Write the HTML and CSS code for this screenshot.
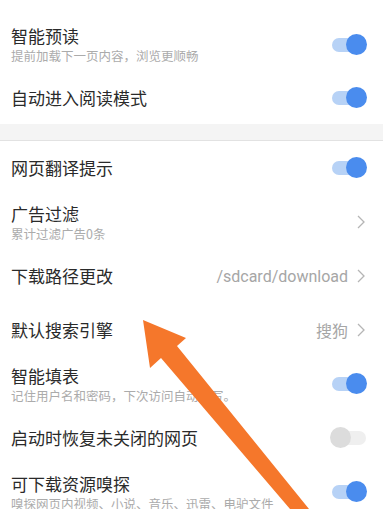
FILE: index.html
```html
<!DOCTYPE html>
<html lang="zh">
<head>
<meta charset="utf-8">
<link rel="stylesheet" href="styles.css">
</head>
<body>
<div class="page">
  <div class="group first">
    <div class="row">
      <div class="text"><div class="title">智能预读</div><div class="sub">提前加载下一页内容，浏览更顺畅</div></div>
      <div class="toggle on"><span class="thumb"></span></div>
    </div>
    <div class="row">
      <div class="text"><div class="title">自动进入阅读模式</div></div>
      <div class="toggle on"><span class="thumb"></span></div>
    </div>
  </div>
  <div class="band"></div>
  <div class="group">
    <div class="row">
      <div class="text"><div class="title">网页翻译提示</div></div>
      <div class="toggle on"><span class="thumb"></span></div>
    </div>
    <div class="row">
      <div class="text"><div class="title">广告过滤</div><div class="sub">累计过滤广告0条</div></div>
      <div class="right"><svg class="chev" width="8" height="14" viewBox="0 0 8 14"><polyline points="1,1 7,7 1,13" fill="none" stroke="#b5b5b5" stroke-width="1.3"/></svg></div>
    </div>
    <div class="row">
      <div class="text"><div class="title">下载路径更改</div></div>
      <div class="right"><span class="value latin">/sdcard/download</span><svg class="chev" width="8" height="14" viewBox="0 0 8 14"><polyline points="1,1 7,7 1,13" fill="none" stroke="#b5b5b5" stroke-width="1.3"/></svg></div>
    </div>
    <div class="row">
      <div class="text"><div class="title">默认搜索引擎</div></div>
      <div class="right"><span class="value">搜狗</span><svg class="chev" width="8" height="14" viewBox="0 0 8 14"><polyline points="1,1 7,7 1,13" fill="none" stroke="#b5b5b5" stroke-width="1.3"/></svg></div>
    </div>
    <div class="row">
      <div class="text"><div class="title">智能填表</div><div class="sub">记住用户名和密码，下次访问自动填写。</div></div>
      <div class="toggle on"><span class="thumb"></span></div>
    </div>
    <div class="row">
      <div class="text"><div class="title">启动时恢复未关闭的网页</div></div>
      <div class="toggle off"><span class="thumb"></span></div>
    </div>
    <div class="row">
      <div class="text"><div class="title">可下载资源嗅探</div><div class="sub">嗅探网页内视频、小说、音乐、迅雷、电驴文件</div></div>
      <div class="toggle on"><span class="thumb"></span></div>
    </div>
  </div>
  <svg class="arrow" width="383" height="509" viewBox="0 0 383 509">
    <polygon points="143,320 186,338 177,346 309,509 290,509 161,358 150,368" fill="#f5772b"/>
  </svg>
</div>
</body>
</html>
```
FILE: styles.css
```css
html, body {
  margin: 0;
  padding: 0;
  background: #ffffff;
}
.page {
  position: relative;
  width: 383px;
  height: 509px;
  overflow: hidden;
  font-family: "Noto Sans CJK SC", "Noto Sans", sans-serif;
}
.group.first {
  padding-top: 18px;
}
.row {
  height: 53px;
  display: flex;
  align-items: center;
  justify-content: space-between;
  padding: 0 17px 0 11px;
}
.group:not(.first) .row {
  height: 54px;
}
.text {
  display: flex;
  flex-direction: column;
}
.title {
  font-size: 17px;
  line-height: 22px;
  color: #2a2a2a;
}
.sub {
  font-size: 12.5px;
  line-height: 17px;
  color: #ababab;
}
.band {
  height: 16px;
  background: #f4f4f4;
  border-bottom: 1px solid #e2e2e2;
}
.toggle {
  position: relative;
  width: 34px;
  height: 14px;
  border-radius: 7px;
}
.toggle .thumb {
  position: absolute;
  top: -4px;
  width: 21px;
  height: 21px;
  border-radius: 50%;
}
.toggle.on {
  background: #b7d2f6;
}
.toggle.on .thumb {
  right: -1px;
  background: #4a8cee;
}
.toggle.off {
  background: #efefef;
}
.toggle.off .thumb {
  left: -2px;
  background: #dcdcdc;
}
.right {
  display: flex;
  align-items: center;
  gap: 9px;
  margin-right: 1px;
}
.value {
  font-size: 16px;
  color: #a6a6a6;
}
.value.latin {
  font-family: Roboto, "Noto Sans", sans-serif;
  font-size: 16px;
}
.chev {
  display: block;
}
.arrow {
  position: absolute;
  left: 0;
  top: 0;
}
```
